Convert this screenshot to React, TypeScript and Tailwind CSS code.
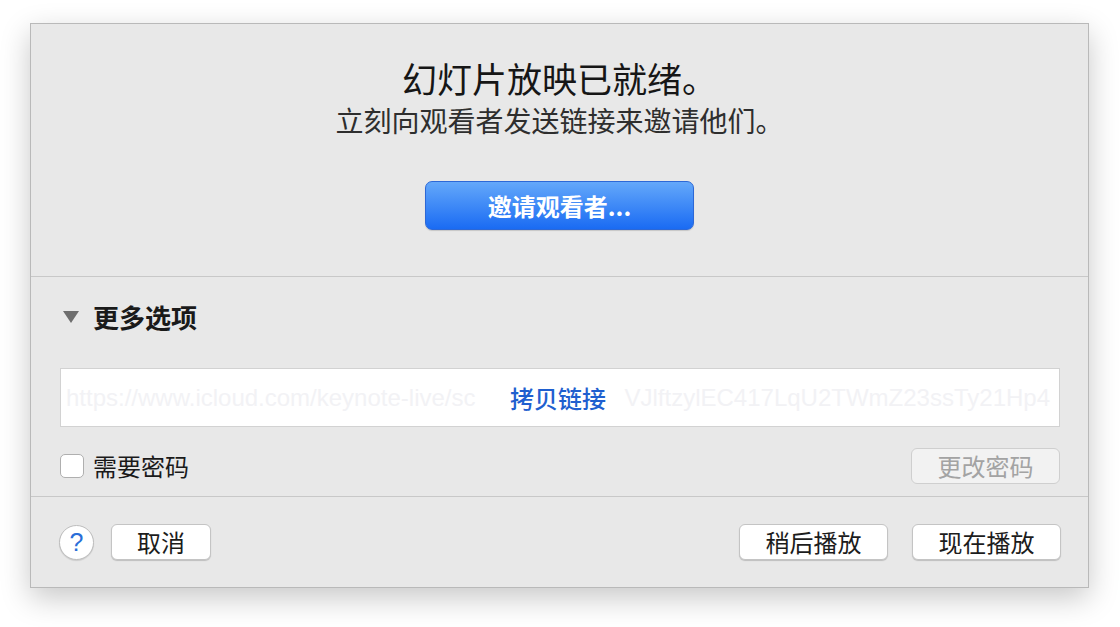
import { ReactNode } from 'react';

const FONT = '[font-family:"Noto_Sans_CJK_SC","Liberation_Sans",sans-serif]';

const PlainButton = ({ children, className = '', disabled = false }: { children: ReactNode; className?: string; disabled?: boolean }) => (
  <button
    className={
      'h-[36px] rounded-[6px] border text-[24px] leading-none flex items-center justify-center ' +
      (disabled
        ? 'bg-[#f2f2f2] border-[#cfcfcf] text-[#a3a3a3]'
        : 'bg-white border-[#c4c4c4] text-[#1c1c1c] shadow-[0_1px_1px_rgba(0,0,0,0.18)]') +
      ' ' +
      className
    }
  >
    {children}
  </button>
);

export default function App() {
  return (
    <div className={`min-h-[627px] w-[1120px] bg-white pt-[23px] pl-[30px] ${FONT}`}>
      <div className="w-[1059px] h-[565px] bg-[#e8e8e8] border border-[#b9b9b9] shadow-[0_10px_28px_rgba(0,0,0,0.22)] flex flex-col">
        {/* header */}
        <div className="h-[253px] flex flex-col items-center pt-[34px] border-b border-[#c8c8c8]">
          <div className="text-[35px] leading-[40px] text-[#161616]">幻灯片放映已就绪。</div>
          <div className="mt-[7px] text-[28px] leading-[31px] text-[#2e2e2e]">立刻向观看者发送链接来邀请他们。</div>
          <button className="mt-[45px] w-[269px] h-[49px] rounded-[7px] border border-[#2d68d6] bg-[linear-gradient(to_bottom,#64a8fa,#1a6bf3)] text-white text-[24px] font-bold leading-none flex items-center justify-center shadow-[0_1px_1px_rgba(0,0,0,0.15)]">
            邀请观看者...
          </button>
        </div>

        {/* options */}
        <div className="h-[220px] pl-[29px] pr-[28px] pt-[25px] border-b border-[#c8c8c8] flex flex-col">
          <div className="h-[30px] flex items-center">
            <svg width="16" height="12" viewBox="0 0 16 12" className="ml-[3px]">
              <polygon points="0,0 16,0 8,12" fill="#6e6e6e" />
            </svg>
            <span className="ml-[14px] text-[26px] font-bold text-[#1a1a1a] leading-none">更多选项</span>
          </div>

          <div className="mt-[36px] h-[59px] bg-white border border-[#d2d2d2] flex items-center text-[24px] leading-none">
            <div className="flex-1 whitespace-nowrap pl-[5px] text-[#f2f2f5] [font-family:'Liberation_Sans',sans-serif]">
              https://www.icloud.com/keynote-live/sc
            </div>
            <span className="px-[6px] text-[24px] text-[#1f5fcf] font-medium">拷贝链接</span>
            <div className="flex-1 whitespace-nowrap flex justify-end pr-[9px] text-[#f2f2f5] [font-family:'Liberation_Sans',sans-serif]">
              <span>VJlftzylEC417LqU2TWmZ23ssTy21Hp4</span>
            </div>
          </div>

          <div className="mt-[21px] h-[36px] flex items-center">
            <div className="w-[24px] h-[24px] rounded-[5px] bg-white border border-[#afafaf]" />
            <span className="ml-[9px] text-[24px] text-[#1a1a1a] leading-none">需要密码</span>
            <PlainButton disabled className="ml-auto w-[149px]">更改密码</PlainButton>
          </div>
        </div>

        {/* footer */}
        <div className="flex-1 flex items-center pl-[28px] pr-[27px]">
          <div className="w-[35px] h-[35px] rounded-full bg-white border border-[#bdbdbd] flex items-center justify-center text-[25px] font-medium text-[#2a6ed8] leading-none shadow-[0_1px_1px_rgba(0,0,0,0.12)] [font-family:'Liberation_Sans',sans-serif]">
            ?
          </div>
          <PlainButton className="ml-[17px] w-[100px]">取消</PlainButton>
          <PlainButton className="ml-auto w-[149px]">稍后播放</PlainButton>
          <PlainButton className="ml-[24px] w-[149px]">现在播放</PlainButton>
        </div>
      </div>
    </div>
  );
}
